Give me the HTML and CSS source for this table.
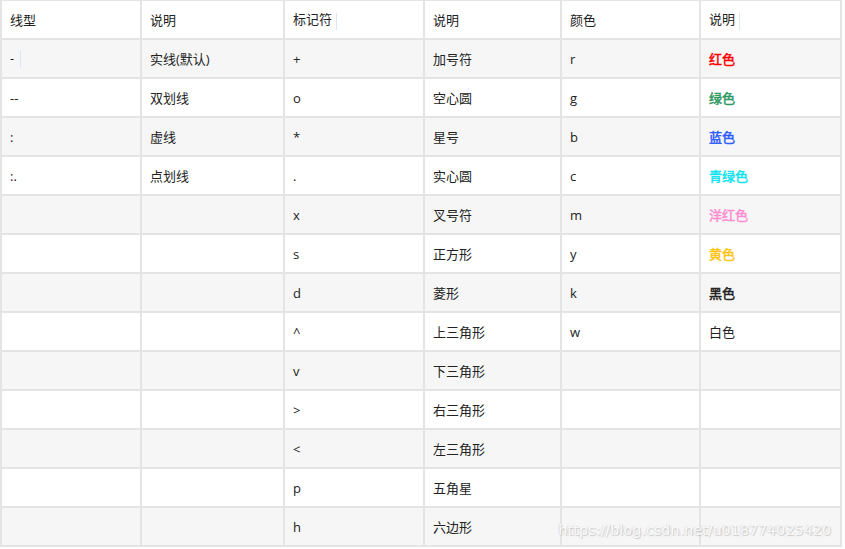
FILE: index.html
```html
<!DOCTYPE html>
<html lang="zh">
<head>
<meta charset="utf-8">
<link rel="stylesheet" href="styles.css">
</head>
<body>
<div class="wrap">
<table class="grid">
<colgroup><col class="c1"><col class="c2"><col class="c3"><col class="c4"><col class="c5"><col class="c6"></colgroup>
<thead>
<tr><th>线型</th><th>说明</th><th>标记符<span class="caret"></span></th><th>说明</th><th>颜色</th><th>说明<span class="caret"></span></th></tr>
</thead>
<tbody>
<tr><td>-<span class="caret sp"></span></td><td>实线(默认)</td><td>+</td><td>加号符</td><td>r</td><td class="b red">红色</td></tr>
<tr><td>--</td><td>双划线</td><td>o</td><td>空心圆</td><td>g</td><td class="b green">绿色</td></tr>
<tr><td>:</td><td>虚线</td><td>*</td><td>星号</td><td>b</td><td class="b blue">蓝色</td></tr>
<tr><td>:.</td><td>点划线</td><td>.</td><td>实心圆</td><td>c</td><td class="b cyan">青绿色</td></tr>
<tr><td></td><td></td><td>x</td><td>叉号符</td><td>m</td><td class="b pink">洋红色</td></tr>
<tr><td></td><td></td><td>s</td><td>正方形</td><td>y</td><td class="b yellow">黄色</td></tr>
<tr><td></td><td></td><td>d</td><td>菱形</td><td>k</td><td class="b">黑色</td></tr>
<tr><td></td><td></td><td>^</td><td>上三角形</td><td>w</td><td>白色</td></tr>
<tr><td></td><td></td><td>v</td><td>下三角形</td><td></td><td></td></tr>
<tr><td></td><td></td><td>&gt;</td><td>右三角形</td><td></td><td></td></tr>
<tr><td></td><td></td><td>&lt;</td><td>左三角形</td><td></td><td></td></tr>
<tr><td></td><td></td><td>p</td><td>五角星</td><td></td><td></td></tr>
<tr><td></td><td></td><td>h</td><td>六边形</td><td></td><td></td></tr>
</tbody>
</table>
<div class="watermark">https://blog.csdn.net/u018774025420</div>
</div>
</body>
</html>
```
FILE: styles.css
```css
html, body {
  margin: 0;
  padding: 0;
  background: #ffffff;
}
.wrap {
  position: relative;
  width: 845px;
  height: 549px;
  overflow: hidden;
}
.grid {
  border-collapse: collapse;
  table-layout: fixed;
  width: 840px;
  margin-top: -1px;
  font-family: "Open Sans", "Noto Sans CJK SC", sans-serif;
  font-size: 13px;
  color: #222222;
}
.c1 { width: 140px; }
.c2 { width: 143px; }
.c3 { width: 140px; }
.c4 { width: 137px; }
.c5 { width: 139px; }
.c6 { width: 141px; }
.grid th, .grid td {
  border: 2px solid #e4e4e4;
  height: 37px;
  padding: 0 0 0 8px;
  text-align: left;
  font-weight: normal;
  vertical-align: middle;
  white-space: nowrap;
}
.grid thead th {
  border-top-width: 2px;
}
.grid tbody tr:nth-child(odd) td {
  background: #f6f6f6;
}
.b {
  -webkit-text-stroke: 0.5px currentColor;
}
.red { color: #ff0000; }
.green { color: #2e9a63; }
.blue { color: #2f5cff; }
.cyan { color: #12e2ef; }
.pink { color: #ff8ed0; }
.yellow { color: #fcc419; }
.caret {
  display: inline-block;
  width: 1px;
  height: 17px;
  background: #dbe6f5;
  margin-left: 4px;
  vertical-align: middle;
}
.caret.sp { margin-left: 6px; }
.watermark {
  position: absolute;
  right: 14px;
  bottom: 11px;
  font-family: "DejaVu Sans", sans-serif;
  font-size: 14px;
  color: rgba(255, 255, 255, 0.85);
  text-shadow: 1px 1px 1px rgba(150, 150, 150, 0.45), -1px 0 1px rgba(170, 170, 170, 0.3);
  letter-spacing: 0.2px;
}
```
